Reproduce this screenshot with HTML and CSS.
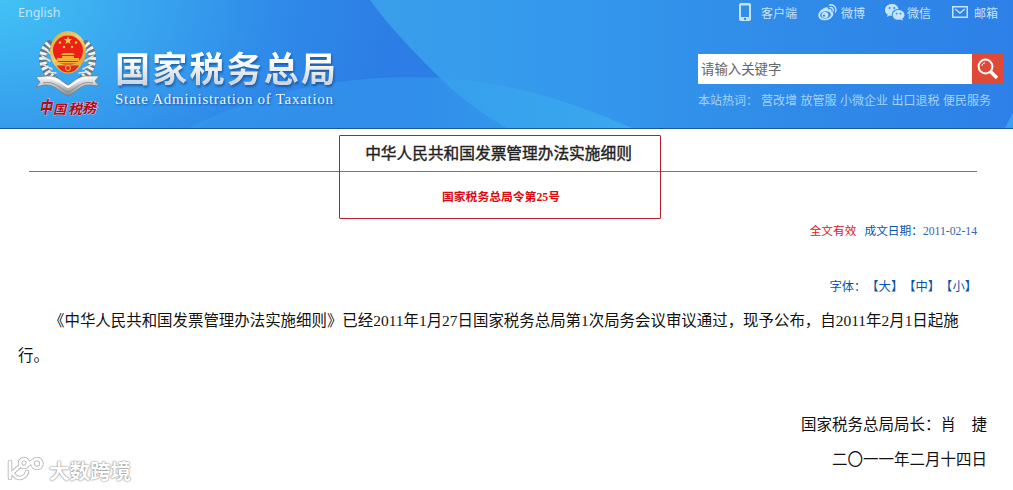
FILE: index.html
```html
<!DOCTYPE html>
<html lang="zh-CN">
<head>
    <meta charset="UTF-8">
    <meta name="viewport" content="width=device-width, initial-scale=1.0">
    <title>国家税务总局</title>
    <link rel="stylesheet" href="styles.css">
</head>
<body>

    <header class="header">
        <svg class="header-bg" width="1013" height="128" viewBox="0 0 1013 128">
            <defs>
                <linearGradient id="right" x1="0" x2="1" y1="0" y2="0">
                    <stop offset="0" stop-color="#399fea"/>
                    <stop offset=".3" stop-color="#3499ed"/>
                    <stop offset=".65" stop-color="#308be8"/>
                    <stop offset="1" stop-color="#2d80e7"/>
                </linearGradient>
                <linearGradient id="wave" gradientUnits="userSpaceOnUse" x1="190" x2="632" y1="0" y2="0">
                    <stop offset="0" stop-color="#3aa5ee" stop-opacity=".3"/>
                    <stop offset=".5" stop-color="#34a0f0" stop-opacity=".5"/>
                    <stop offset="1" stop-color="#3fb0ee" stop-opacity=".7"/>
                </linearGradient>
            </defs>
            <path d="M370 0C391 29 416 54 440 78C462 99 485 116 507 128H1013V0Z" fill="url(#right)"/>
            <path d="M188 128C250 97 326 77 410 77C500 77 570 101 632 128Z" fill="url(#wave)"/>
            <path d="M1013 112L1005 128H1013Z" fill="#3b9fef"/>
        </svg>

        <div class="brand">
            <a class="lang" href="#">English</a>
            <div class="logo">
                <svg class="emblem" width="66" height="92" viewBox="0 0 66 92">
                    <defs>
                        <linearGradient id="silver" x1="0" x2="0" y1="0" y2="1">
                            <stop offset="0" stop-color="#fff"/>
                            <stop offset="1" stop-color="#85898d"/>
                        </linearGradient>
                        <linearGradient id="gold" x1="0" x2="1" y1="0" y2="1">
                            <stop offset="0" stop-color="#dba53f"/>
                            <stop offset=".5" stop-color="#f2d36c"/>
                            <stop offset="1" stop-color="#c98f35"/>
                        </linearGradient>
                    </defs>
                    <g fill="none" stroke-linecap="round">
                        <path d="M14 14C4 23 6 39 19 49M51 14C61 23 59 39 47 49" stroke="#687883" stroke-width="7.500"/>
                        <path d="M14 14C4 23 6 39 19 49M51 14C61 23 59 39 47 49" stroke="#f4f5f5" stroke-width="7" stroke-dasharray="2.600 2.400" stroke-linecap="butt"/>
                        <path d="M10 19L16 24M7 26L15 31M7 34L17 39M12 42L21 43M55 19L49 24M58 26L50 31M58 34L48 39M53 42L44 43" stroke="#dfe3e5" stroke-width="1.6"/>
                    </g>
                    <path d="M1 47L12 46C23 45 27 52 33 55C39 52 43 45 54 46L64 46L60 51L64 56L55 55C46 54 42 62 33 66C24 62 20 54 10 55L1 57L5 52Z" fill="url(#silver)" stroke="#72787c" stroke-width=".7"/>
                    <path d="M12 48C21 47 27 54 33 57C39 54 45 47 53 48" fill="none" stroke="#fff" stroke-width="2"/>
                    <path d="M8 53C20 50 26 60 33 62C40 60 46 50 58 53" fill="none" stroke="#7c8287" stroke-width=".8"/>
                    <ellipse cx="33" cy="21.5" rx="18" ry="20.5" fill="url(#gold)"/>
                    <circle cx="33" cy="20.5" r="15" fill="#ee1f17"/>
                    <path d="M33 6L34 9H37L34.700 11L35.500 14L33 12.200L30.500 14L31.300 11L29 9H32Z" fill="#f9d83f"/>
                    <g fill="#f9d83f">
                        <circle cx="25" cy="12.500" r="1.200"/><circle cx="41" cy="12.500" r="1.200"/>
                        <circle cx="29" cy="17" r="1.200"/><circle cx="37" cy="17" r="1.200"/>
                    </g>
                    <path d="M28 23H38L40 25H26ZM27 26H39V28H44V31H22V28H27ZM20 32H46V33.500H20Z" fill="#f5ae35"/>
                    <path d="M21 35H45C42 41 38 43 33 43S24 41 21 35Z" fill="#e12b1c" stroke="#e6b64b" stroke-width="1.200"/>
                    <circle cx="33" cy="38" r="2.500" fill="none" stroke="#f3c94f"/>
                    <g class="script-text">
                        <text x="4" y="84" font-size="18" textLength="13" lengthAdjust="spacingAndGlyphs">中</text>
                        <text x="18" y="84" font-size="13">国</text>
                        <text x="33" y="84" font-size="14">税</text>
                        <text x="47" y="83" font-size="14">務</text>
                    </g>
                </svg>
                <div class="logo-text">
                    <div class="logo-cn">国家税务总局</div>
                    <div class="logo-en">State Administration of Taxation</div>
                </div>
            </div>
        </div>

        <div class="tools">
            <nav class="links">
                <a class="link-app" href="#">
                    <svg width="12" height="18" viewBox="0 0 12 18"><path fill="currentColor" fill-rule="evenodd" d="M2 0H10Q12 0 12 2V16Q12 18 10 18H2Q0 18 0 16V2Q0 0 2 0ZM2 2.500V14H10V2.500ZM5 15V17H7V15Z"/></svg>
                    客户端
                </a>
                <a class="link-weibo" href="#">
                    <svg width="19" height="17" viewBox="0 0 19 17">
                        <path fill="currentColor" fill-rule="evenodd" d="M7.500 3.500C9.500 2.700 10.600 3.600 10 5.500C12.500 4.600 14.200 5.500 13.400 7.500C15.500 8.200 16 10 14.800 12C13 15 9.500 16.500 6 16.200C2.500 16 0 14 .3 11C.6 8 4 4.700 7.500 3.500ZM7.500 7.300C4.300 7.600 2.200 9.300 2.200 11.300S4.500 14.800 7.600 14.500S13 12.300 12.800 10.300S10.500 7 7.500 7.300Z"/>
                        <ellipse cx="7" cy="11" rx="3.400" ry="3" fill="currentColor"/>
                        <circle cx="6" cy="11.700" r="1.100" fill="#2f88e8"/>
                        <path d="M11.500 1C16 0 19 4 17.400 8M12 3.600C14.400 3.100 15.700 4.900 15 7" fill="none" stroke="currentColor" stroke-width="1.400" stroke-linecap="round"/>
                    </svg>
                    微博
                </a>
                <a class="link-wechat" href="#">
                    <svg width="20" height="17" viewBox="0 0 20 17">
                        <path fill="currentColor" d="M7 0C3 0 0 2.600 0 6C0 8 1 9.500 2.600 10.600L2 13L4.700 11.600L7 12C6 8 9 5 13.500 5C13 2 10.500 0 7 0Z"/>
                        <path fill="currentColor" d="M13.500 6C10 6 7.700 8.200 7.700 11S10 15.800 13.500 15.800L15.500 15.500L17.700 16.800L17.200 14.700C18.700 13.700 19.500 12.500 19.500 11C19.500 8.200 17 6 13.500 6Z"/>
                        <g fill="#2f88e8"><circle cx="4.600" cy="4" r="1"/><circle cx="9.200" cy="4" r="1"/><circle cx="11.600" cy="9.600" r=".9"/><circle cx="15.500" cy="9.600" r=".9"/></g>
                    </svg>
                    微信
                </a>
                <a class="link-mail" href="#">
                    <svg width="16" height="12" viewBox="0 0 16 12"><path fill="none" stroke="currentColor" stroke-width="1.500" d="M.75 .75H15.250V11.250H.75ZM3.200 3L8 7L12.800 3"/></svg>
                    邮箱
                </a>
            </nav>
            <form class="search">
                <input class="search-input" type="text" placeholder="请输入关键字">
                <button class="search-btn" type="button" aria-label="搜索">
                    <svg width="22" height="22" viewBox="0 0 22 22" fill="none" stroke="#fff"><circle cx="8.500" cy="8.500" r="6.900" stroke-width="2"/><path d="M4.800 8C5 6.200 6.500 5 8 4.800" stroke-width="1"/><path d="M13.500 13.500L20 20" stroke-width="3.600"/></svg>
                </button>
            </form>
            <div class="hot">
                <span class="hot-label">本站热词：</span>
                <a href="#">营改增</a>
                <a href="#">放管服</a>
                <a href="#">小微企业</a>
                <a href="#">出口退税</a>
                <a href="#">便民服务</a>
            </div>
        </div>
    </header>

    <main class="article">
        <h1 class="title">中华人民共和国发票管理办法实施细则</h1>
        <h2 class="number">国家税务总局令第25号</h2>
        <div class="mark-box"></div>
        <div class="meta">
            <span class="valid">全文有效</span>
            <span>成文日期：<span class="date">2011-02-14</span></span>
        </div>
        <div class="font-size">字体：<a href="#">【大】</a><a href="#">【中】</a><a href="#">【小】</a></div>
        <p class="content">《中华人民共和国发票管理办法实施细则》已经2011年1月27日国家税务总局第1次局务会议审议通过，现予公布，自2011年2月1日起施行。</p>
        <div class="sign">
            <div>国家税务总局局长：肖　捷</div>
            <div>二〇一一年二月十四日</div>
        </div>
    </main>

    <div class="watermark">
        <svg width="38" height="26" viewBox="0 0 38 26">
            <g class="wm-outline"><path d="M3 6V22M12 11L5 17L9 21C14 24 19 20 20 16"/><circle cx="17" cy="7" r="4"/><circle cx="30" cy="7.500" r="4.500"/><path d="M20 9L26 5"/></g>
            <g class="wm-fill"><path d="M3 6V22M12 11L5 17L9 21C14 24 19 20 20 16"/><circle cx="17" cy="7" r="4"/><circle cx="30" cy="7.500" r="4.500"/><path d="M20 9L26 5"/></g>
        </svg>
        <span>大数跨境</span>
    </div>

</body>
</html>
```

FILE: styles.css
```css
* { box-sizing: border-box; }
body { margin: 0; height: 490px; overflow: hidden; position: relative; background: #fff; font-family: "Liberation Sans", "Noto Sans CJK SC", sans-serif; }
a { color: inherit; text-decoration: none; }
svg { display: block; flex: none; }

.header { position: relative; display: flex; justify-content: space-between; height: 129px; border-bottom: 1px solid #1c5796; background: radial-gradient(ellipse 400px 270px at 0 0, #42c2f5 0, #38a3ee 38%, #2f8ae9 70%, #2c7de5 100%); color: #c5e3fb; }
.header-bg { position: absolute; left: 0; top: 0; }
.brand, .tools { position: relative; }

.brand { padding: 4px 0 0 18px; }
.lang { display: block; height: 18px; line-height: 18px; font-family: "Noto Sans", sans-serif; font-size: 12.5px; }
.logo { display: flex; padding: 8px 0 0 17px; }
.script-text { font-family: "Noto Sans CJK SC", sans-serif; font-weight: bold; font-style: italic; fill: #b50b16; stroke: #e8d8e4; stroke-width: .7px; paint-order: stroke; }
.logo-text { padding: 14px 0 0 14px; white-space: nowrap; }
.logo-cn { height: 46px; line-height: 46px; font-family: "Noto Sans CJK SC", sans-serif; font-weight: bold; font-size: 35px; letter-spacing: 2.2px; color: transparent; background: linear-gradient(#fff 35%, #cfd6df 85%); -webkit-background-clip: text; background-clip: text; filter: drop-shadow(1px 2px 1px rgba(15, 60, 120, .6)); }
.logo-en { height: 18px; line-height: 18px; font-family: "Liberation Serif", serif; font-size: 15px; letter-spacing: .72px; color: #eaf4fd; text-shadow: 1px 1px 2px #195297; }

.tools { width: 315px; padding-top: 2px; font-size: 12px; }
.links { display: flex; height: 20px; padding-left: 41px; }
.links a { display: flex; align-items: center; white-space: nowrap; }
.link-app { gap: 10px; width: 79px; }
.link-weibo { gap: 4px; width: 67px; }
.link-wechat { gap: 2px; width: 67px; }
.link-mail { gap: 6px; }
.search { display: flex; width: 306px; height: 30px; margin-top: 32px; }
.search-input { width: 274px; height: 30px; padding: 0 3px 2px; border: 0; border-radius: 0; outline: 0; background: #fff; font-family: "Noto Sans CJK SC", sans-serif; font-size: 13.4px; }
.search-input::placeholder { color: #666; }
.search-btn { display: flex; align-items: center; justify-content: center; width: 32px; height: 30px; padding: 0; border: 0; background: #df4938; cursor: pointer; }
.hot { display: flex; gap: 3.5px; height: 18px; margin-top: 8px; line-height: 18px; color: #a2d2f8; white-space: nowrap; }
.hot-label { width: 59.5px; }

.article { position: relative; padding: 6px 25px 0 18px; color: #111; text-spacing-trim: space-all; }
.title { height: 37px; margin: 0 11px; padding-right: 9px; border-bottom: 1px solid #777; line-height: 38px; text-align: center; font-size: 15.7px; font-weight: normal; color: #222; -webkit-text-stroke: .4px #222; }
.number { height: 24px; margin: 13px 0 0 -4px; line-height: 24px; text-align: center; font-family: "Liberation Serif", "Noto Sans CJK SC", serif; font-size: 11.8px; color: #d90c14; }
.mark-box { position: absolute; left: 339px; top: 6px; width: 322px; height: 84px; border: 1px solid #b5202c; border-radius: 1px; }
.meta { display: flex; justify-content: flex-end; gap: 8px; height: 24px; margin: 10px 11px 0 0; line-height: 24px; font-size: 11.7px; color: #0754a8; }
.valid { color: #e01616; }
.date { font-family: "Liberation Serif", serif; color: #3864ae; }
.font-size { height: 24px; margin: 32px 11px 0 0; line-height: 24px; text-align: right; font-size: 12.3px; color: #0754a8; }
.content { margin: 4px 0 0; line-height: 35px; text-indent: 31px; font-family: "Liberation Serif", "Noto Sans CJK SC", serif; font-size: 15.45px; }
.sign { margin: 34px 1px 0 0; line-height: 35px; text-align: right; font-size: 15.5px; }

.watermark { position: absolute; left: 7px; top: 456px; display: flex; gap: 4px; line-height: 28px; font-family: "Noto Sans CJK SC", sans-serif; font-size: 20.5px; font-weight: bold; color: #fff; text-shadow: 0 0 2px #777, 0 0 1px #999; white-space: nowrap; }
.wm-outline, .wm-fill { fill: none; stroke-linecap: round; }
.wm-outline { stroke: #b5b5b5; stroke-width: 4.5px; }
.wm-fill { stroke: #fff; stroke-width: 2.8px; }
```
